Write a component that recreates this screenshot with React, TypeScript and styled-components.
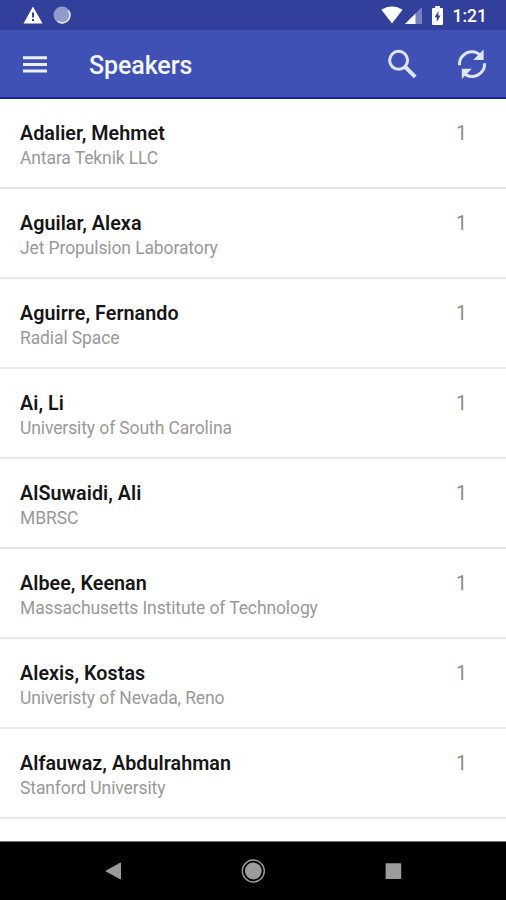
//Library
import React from 'react'
import styled, { createGlobalStyle } from 'styled-components'

interface Speaker {
    name: string
    company: string
    sessions: number
}

//Speakers in alphabetical order
const speakers: Array<Speaker> = [
    { name: 'Adalier, Mehmet', company: 'Antara Teknik LLC', sessions: 1 },
    { name: 'Aguilar, Alexa', company: 'Jet Propulsion Laboratory', sessions: 1 },
    { name: 'Aguirre, Fernando', company: 'Radial Space', sessions: 1 },
    { name: 'Ai, Li', company: 'University of South Carolina', sessions: 1 },
    { name: 'AlSuwaidi, Ali', company: 'MBRSC', sessions: 1 },
    { name: 'Albee, Keenan', company: 'Massachusetts Institute of Technology', sessions: 1 },
    { name: 'Alexis, Kostas', company: 'Univeristy of Nevada, Reno', sessions: 1 },
    { name: 'Alfauwaz, Abdulrahman', company: 'Stanford University', sessions: 1 },
]

/**
 * Android status bar with notification and system icons
 */
const StatusBar: React.FC = () => {
    return (
        <StatusContainer>
            <Notifications>
                <svg width="20" height="18" viewBox="0 0 20 18">
                    <path d="M10 0.5L19.5 17.5H0.5Z" fill="#fff" />
                    <path d="M9 6.5h2v5H9zM9 13h2v2H9z" fill="#32409b" />
                </svg>
                <svg width="18" height="18" viewBox="0 0 18 18">
                    <circle cx="9" cy="9" r="8.5" fill="#929bcd" />
                    <path d="M15.4 4.4A7.8 7.8 0 0 1 4.6 15.4" fill="none" stroke="#e4e8fa" strokeWidth="1.6" />
                </svg>
            </Notifications>
            <System>
                <svg width="22" height="18" viewBox="0 0 22 18">
                    <path d="M0.4 3.8C6.5-0.7 15.5-0.7 21.6 3.8L11 17.4Z" fill="#fff" />
                </svg>
                <Signal width="17" height="17" viewBox="0 0 17 17">
                    <path d="M17 0V17H0Z" fill="#7681c3" />
                    <path d="M10.5 6.5V17H0Z" fill="#fff" />
                </Signal>
                <Battery width="11" height="19" viewBox="0 0 11 19">
                    <path d="M3.2 0h4.6v2H10a1 1 0 0 1 1 1v15a1 1 0 0 1-1 1H1a1 1 0 0 1-1-1V3a1 1 0 0 1 1-1h2.2z" fill="#fff" />
                    <path d="M6.5 5L2.5 11.2H4.8V16L8.5 9.6H6.3Z" fill="#32409b" />
                </Battery>
                <Clock>1:21</Clock>
            </System>
        </StatusContainer>
    )
}

/**
 * Toolbar with menu, page title and actions
 */
const Toolbar: React.FC = () => {
    return (
        <ToolbarContainer>
            <svg width="24" height="18" viewBox="0 0 24 18">
                <path d="M0 1.2h24v3H0zM0 7.9h24v3H0zM0 14.6h24v3H0z" fill="#eceefa" />
            </svg>
            <Title>Speakers</Title>
            <Actions>
                <svg width="30" height="30" viewBox="0 0 30 30">
                    <circle cx="11.6" cy="11.3" r="9" fill="none" stroke="#dfe3f8" strokeWidth="3" />
                    <path d="M17.8 17.5L28.2 27.9" stroke="#dfe3f8" strokeWidth="4" />
                </svg>
                <svg width="30" height="30" viewBox="0 0 30 30">
                    <path d="M2.6 16.2C1.6 8.5 8.4 2.8 15 2.8C18.7 2.8 21.4 4.3 23.6 6.8" fill="none" stroke="#dfe3f8" strokeWidth="3" />
                    <path d="M26.6 0.5V10.9H16.2Z" fill="#dfe3f8" />
                    <path d="M27.4 14.2C28.4 21.7 21.6 27.4 15 27.4C11.3 27.4 8.6 25.9 6.4 23.4" fill="none" stroke="#dfe3f8" strokeWidth="3" />
                    <path d="M4.8 29.9V19.8H14.8Z" fill="#dfe3f8" />
                </svg>
            </Actions>
        </ToolbarContainer>
    )
}

/**
 * Android navigation buttons
 */
const NavigationBar: React.FC = () => {
    return (
        <NavigationContainer>
            <svg width="24" height="24" viewBox="0 0 24 24">
                <path d="M5 12L19.5 4V20Z" fill="#9b9b9b" stroke="#9b9b9b" strokeLinejoin="round" />
            </svg>
            <svg width="24" height="24" viewBox="0 0 24 24">
                <circle cx="12.3" cy="12" r="11" fill="none" stroke="#9b9b9b" strokeWidth="1.4" />
                <circle cx="12.3" cy="12" r="8.4" fill="#9b9b9b" />
            </svg>
            <svg width="24" height="24" viewBox="0 0 24 24">
                <rect x="4.6" y="4.2" width="15.6" height="15.8" rx="0.8" fill="#9b9b9b" />
            </svg>
        </NavigationContainer>
    )
}

const App: React.FC = () => {

    var rows = speakers.map((speaker) => {
        return (
            <Row key={speaker.name}>
                <div>
                    <Name>{speaker.name}</Name>
                    <Company>{speaker.company}</Company>
                </div>
                <Sessions>{speaker.sessions}</Sessions>
            </Row>
        )
    })

    return (
        <Page>
            <GlobalStyle />
            <StatusBar />
            <Toolbar />
            <List>{rows}</List>
            <NavigationBar />
        </Page>
    )
}

export default App

const GlobalStyle = createGlobalStyle`
    body {
        margin: 0;
        background: #fff;
    }

    svg {
        display: block;
        flex-shrink: 0;
    }
`

const Page = styled.div`
    display: flex;
    flex-direction: column;
    height: 900px;
    overflow: hidden;
    background: #fff;
    font-family: Roboto, sans-serif;
`

const StatusContainer = styled.div`
    display: flex;
    flex-shrink: 0;
    justify-content: space-between;
    box-sizing: border-box;
    height: 30px;
    padding: 6px 19px 0 23px;
    background: #32409b;
`

const Notifications = styled.div`
    display: flex;
    gap: 10px;
`

const System = styled.div`
    display: flex;
`

const Signal = styled.svg`
    margin: 1px 0 0 2px;
`

const Battery = styled.svg`
    margin-left: 10px;
`

const Clock = styled.div`
    margin-left: 10px;
    color: #fff;
    font-size: 17.5px;
    font-weight: 500;
    line-height: 20px;
`

const ToolbarContainer = styled.div`
    display: flex;
    flex-shrink: 0;
    align-items: center;
    box-sizing: border-box;
    height: 69px;
    padding: 0 19px 0 23px;
    border-bottom: 2px solid #1b22a2;
    background: #3f51b5;
`

const Title = styled.div`
    margin: 4px 0 0 42px;
    color: #f4f5fd;
    font-size: 25px;
    font-weight: 500;
    letter-spacing: -0.1px;
    line-height: 30px;
`

const Actions = styled.div`
    display: flex;
    gap: 40px;
    margin-left: auto;
`

const List = styled.div`
    flex: 1;
    min-height: 0;
    overflow: hidden;
`

const Row = styled.div`
    display: flex;
    justify-content: space-between;
    box-sizing: border-box;
    height: 90px;
    padding: 23px 39px 0 20px;
    border-bottom: 2px solid #e8e8e8;
`

const Name = styled.div`
    color: #161616;
    font-size: 19.7px;
    font-weight: 600;
    letter-spacing: 0.06px;
    line-height: 24px;
`

const Company = styled.div`
    margin-top: 1px;
    color: #999;
    font-size: 17.5px;
    letter-spacing: -0.11px;
    line-height: 22px;
`

const Sessions = styled.div`
    color: #8c8c8c;
    font-size: 19.7px;
    line-height: 24px;
`

const NavigationContainer = styled.div`
    display: flex;
    flex-shrink: 0;
    align-items: center;
    justify-content: space-between;
    box-sizing: border-box;
    height: 59px;
    padding: 0 101px;
    border-top: 1px solid #777;
    background: #000;
`
